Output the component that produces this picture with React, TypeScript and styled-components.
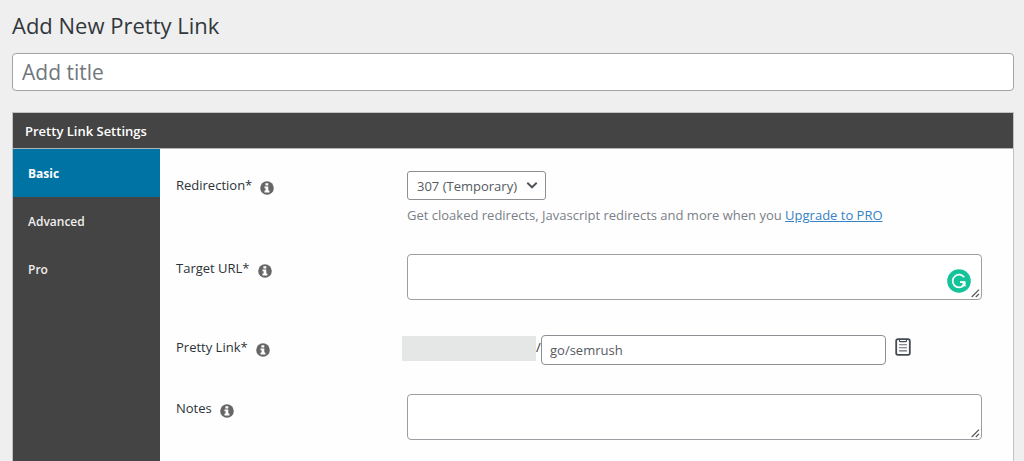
import React from "react";
import styled, { createGlobalStyle } from "styled-components";

const GlobalStyle = createGlobalStyle`
  * { box-sizing: border-box; }
  body {
    margin: 0;
    background: #efefef;
    color: #2c3338;
    font-family: "Open Sans", "Noto Sans", sans-serif;
    font-size: 13px;
    line-height: 20px;
  }
  input, textarea, select, button { font: inherit; color: inherit; margin: 0; }
`;

const Page = styled.main`
  display: flex;
  flex-direction: column;
  min-height: 100vh;
  padding: 10px 10px 0 12px;
`;

const PageTitle = styled.h1`
  margin: 0 0 13px;
  color: #32373c;
  font-size: 22px;
  font-weight: 400;
  line-height: 30px;
`;

const TitleInput = styled.input`
  width: 100%;
  height: 38px;
  padding: 0 9px;
  border: 1px solid #a2a4a7;
  border-radius: 4px;
  background: #fff;
  font-size: 21px;
  &::placeholder { color: #72777c; opacity: 1; }
`;

const Panel = styled.section`
  display: flex;
  flex: 1;
  flex-direction: column;
  margin-top: 21px;
  border: 1px solid #c0c1c3;
  border-bottom: 0;
  background: #fefefe;
`;

const PanelHeader = styled.h2`
  margin: 0;
  padding: 1px 12px 0;
  border-bottom: 1px solid #b4b4b4;
  background: #444;
  color: #fff;
  font-size: 13px;
  font-weight: 600;
  line-height: 34px;
`;

const PanelBody = styled.div`
  display: flex;
  flex: 1;
`;

const Tabs = styled.nav`
  display: flex;
  flex: 0 0 147px;
  flex-direction: column;
  background: #444;
`;

const Tab = styled.button<{ $active?: boolean }>`
  height: 48px;
  padding: 2px 15px 0;
  border: 0;
  background: ${(p) => (p.$active ? "#0073a5" : "transparent")};
  color: ${(p) => (p.$active ? "#fff" : "#eee")};
  font-size: 12px;
  font-weight: ${(p) => (p.$active ? 700 : 600)};
  text-align: left;
`;

const Form = styled.form`
  display: flex;
  flex: 1;
  flex-direction: column;
  gap: 29px;
  padding: 22px 31px 20px 16px;
`;

const Row = styled.div<{ $center?: boolean }>`
  display: grid;
  grid-template-columns: 231px 1fr;
  align-items: ${(p) => (p.$center ? "center" : "start")};
`;

const LabelCell = styled.div<{ $lead?: boolean }>`
  display: flex;
  align-items: flex-start;
  gap: 8px;
  padding-top: ${(p) => (p.$lead ? "4px" : "0")};
`;

const Label = styled.label`
  font-weight: 500;
`;

const InfoSvg = styled.svg`
  display: block;
  width: 14px;
  height: 14px;
  margin-top: 6px;
`;

const Info = () => (
  <InfoSvg viewBox="0 0 14 14" aria-hidden="true">
    <circle cx="7" cy="7" r="6.8" fill="#666" />
    <path d="M5.4 2.3h2.9v2.3H5.4zM4.5 5.4h3.8v4.2h1.1v1.8H4.5V9.6h1.1V7.2H4.5z" fill="#fff" />
  </InfoSvg>
);

const SelectBox = styled.div`
  position: relative;
  width: 139px;
  height: 29px;
`;

const Select = styled.select`
  width: 100%;
  height: 100%;
  padding: 0 24px 0 9px;
  border: 1px solid #8c8f94;
  border-radius: 3px;
  appearance: none;
  background: #fff;
  color: #555a5f;
`;

const Chevron = styled.svg`
  position: absolute;
  top: 8px;
  right: 8px;
  width: 12px;
  height: 12px;
  pointer-events: none;
`;

const Help = styled.p`
  margin: 5px 0 0;
  color: #7b7f86;
  a { color: #3582c4; }
`;

const AreaBox = styled.div`
  position: relative;
  display: flex;
`;

const TextArea = styled.textarea`
  width: 100%;
  height: 46px;
  padding: 4px 8px;
  border: 1px solid #9b9ea3;
  border-radius: 4px;
  background: #fff;
  resize: vertical;
  &::-webkit-resizer { background: transparent; }
`;

const GripSvg = styled.svg`
  position: absolute;
  right: 2px;
  bottom: 2px;
  width: 9px;
  height: 9px;
  pointer-events: none;
`;

const Grip = () => (
  <GripSvg viewBox="0 0 9 9" aria-hidden="true">
    <path d="M.7 8 8 .7M4.8 8 8 4.8" fill="none" stroke="#555" strokeWidth="1.2" />
  </GripSvg>
);

const Assistant = styled.svg`
  position: absolute;
  right: 11px;
  bottom: 7px;
  width: 24px;
  height: 24px;
`;

const SlugGroup = styled.div`
  display: flex;
  align-items: center;
  margin-left: -5px;
  padding: 6px 96px 0 0;
`;

const Domain = styled.span`
  flex: 0 0 134px;
  height: 25px;
  margin-bottom: 3px;
  background: #e5e6e6;
`;

const Slash = styled.span`
  flex: 0 0 5px;
  margin-bottom: 6px;
`;

const SlugInput = styled.input`
  flex: 1;
  min-width: 0;
  height: 30px;
  padding: 0 8px;
  border: 1px solid #8c8f94;
  border-radius: 4px;
  background: #fff;
  color: #555a5f;
`;

const CopyButton = styled.button`
  width: 16px;
  height: 18px;
  margin: 0 -25px 6px 9px;
  padding: 0;
  border: 0;
  background: none;
  svg { display: block; }
`;

export default function App() {
  return (
    <>
      <GlobalStyle />
      <Page>
        <PageTitle>Add New Pretty Link</PageTitle>
        <TitleInput aria-label="Add title" placeholder="Add title" />
        <Panel>
          <PanelHeader>Pretty Link Settings</PanelHeader>
          <PanelBody>
            <Tabs>
              <Tab type="button" $active>Basic</Tab>
              <Tab type="button">Advanced</Tab>
              <Tab type="button">Pro</Tab>
            </Tabs>
            <Form>
              <Row>
                <LabelCell $lead>
                  <Label htmlFor="redirection">Redirection*</Label>
                  <Info />
                </LabelCell>
                <div>
                  <SelectBox>
                    <Select id="redirection" defaultValue="307">
                      <option value="307">307 (Temporary)</option>
                    </Select>
                    <Chevron viewBox="0 0 12 12" aria-hidden="true">
                      <path d="M1.3 3.7 6 8.3l4.7-4.6" fill="none" stroke="#50555a" strokeWidth="1.9" />
                    </Chevron>
                  </SelectBox>
                  <Help>
                    Get cloaked redirects, Javascript redirects and more when you{" "}
                    <a href="#upgrade">Upgrade to PRO</a>
                  </Help>
                </div>
              </Row>
              <Row>
                <LabelCell $lead>
                  <Label htmlFor="target">Target URL*</Label>
                  <Info />
                </LabelCell>
                <AreaBox>
                  <TextArea id="target" />
                  <Grip />
                  <Assistant viewBox="0 0 24 24" aria-hidden="true">
                    <circle cx="12" cy="12" r="11.8" fill="#15c39a" />
                    <path
                      d="M17.2 8.2A6.4 6.4 0 1 0 16.6 16.6M13 13.2h5"
                      fill="none"
                      stroke="#fff"
                      strokeWidth="1.7"
                    />
                    <path d="M14 12.4h4.6v5.4l-1.6-1-1.6 1-1-1.2 1.6-1.6z" fill="#fff" />
                  </Assistant>
                </AreaBox>
              </Row>
              <Row $center>
                <LabelCell>
                  <Label htmlFor="slug">Pretty Link*</Label>
                  <Info />
                </LabelCell>
                <SlugGroup>
                  <Domain />
                  <Slash>/</Slash>
                  <SlugInput id="slug" defaultValue="go/semrush" />
                  <CopyButton type="button" aria-label="Copy link">
                    <svg width="16" height="18" viewBox="0 0 16 18" aria-hidden="true">
                      <rect x="1.2" y="1.2" width="13.6" height="15.6" rx="1.8" fill="#fff" stroke="#454b52" strokeWidth="1.8" />
                      <path d="M4.5 1.5v1.2q0 1 1 1h5q1 0 1-1V1.5" fill="none" stroke="#454b52" strokeWidth="1.2" />
                      <path d="M4 6.7h8M4 9.7h8M4 12.9h8" stroke="#666b70" strokeWidth="1.1" />
                    </svg>
                  </CopyButton>
                </SlugGroup>
              </Row>
              <Row>
                <LabelCell $lead>
                  <Label htmlFor="notes">Notes</Label>
                  <Info />
                </LabelCell>
                <AreaBox>
                  <TextArea id="notes" />
                  <Grip />
                </AreaBox>
              </Row>
            </Form>
          </PanelBody>
        </Panel>
      </Page>
    </>
  );
}
